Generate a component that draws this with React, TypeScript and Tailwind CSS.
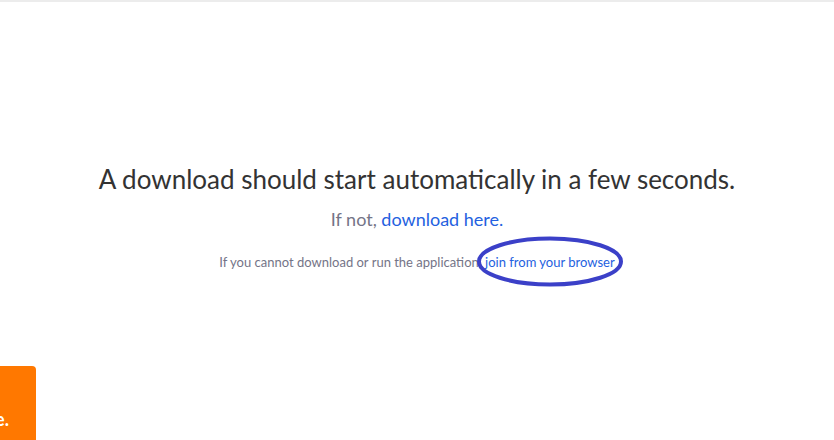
import React from "react";

function Annotation() {
  return (
    <svg
      className="pointer-events-none absolute left-[-8px] top-[-19px]"
      width="150"
      height="54"
      viewBox="0 0 150 54"
      fill="none"
    >
      <ellipse
        cx="73"
        cy="26.5"
        rx="71"
        ry="23"
        stroke="#3b40c8"
        strokeWidth="4"
      />
    </svg>
  );
}

function App() {
  return (
    <div className="relative h-[440px] w-full overflow-hidden bg-white font-['Lato',sans-serif]">
      <div className="h-[2px] w-full bg-[#ececec]" />
      <main className="flex flex-col items-center pt-[160px] text-center">
        <h1 className="text-[26px] leading-[34px] text-[#333333]">
          A download should start automatically in a few seconds.
        </h1>
        <p className="mt-[11px] text-[18px] leading-[24px] text-[#747487]">
          If not, <a className="text-[#2461e0]">download here.</a>
        </p>
        <p className="mt-[22px] text-[13px] leading-[18px] text-[#747487]">
          If you cannot download or run the application,{" "}
          <span className="relative">
            <a className="text-[#2461e0]">join from your browser</a>
            <Annotation />
          </span>
        </p>
      </main>
      <div className="absolute bottom-0 left-[-164px] flex h-[74px] w-[200px] items-end overflow-hidden rounded-tr-[4px] bg-[#ff7800] pb-[12px]">
        <span className="ml-auto mr-[27px] whitespace-nowrap text-[18px] font-bold leading-none text-white">
          here.
        </span>
      </div>
    </div>
  );
}

export default App;
